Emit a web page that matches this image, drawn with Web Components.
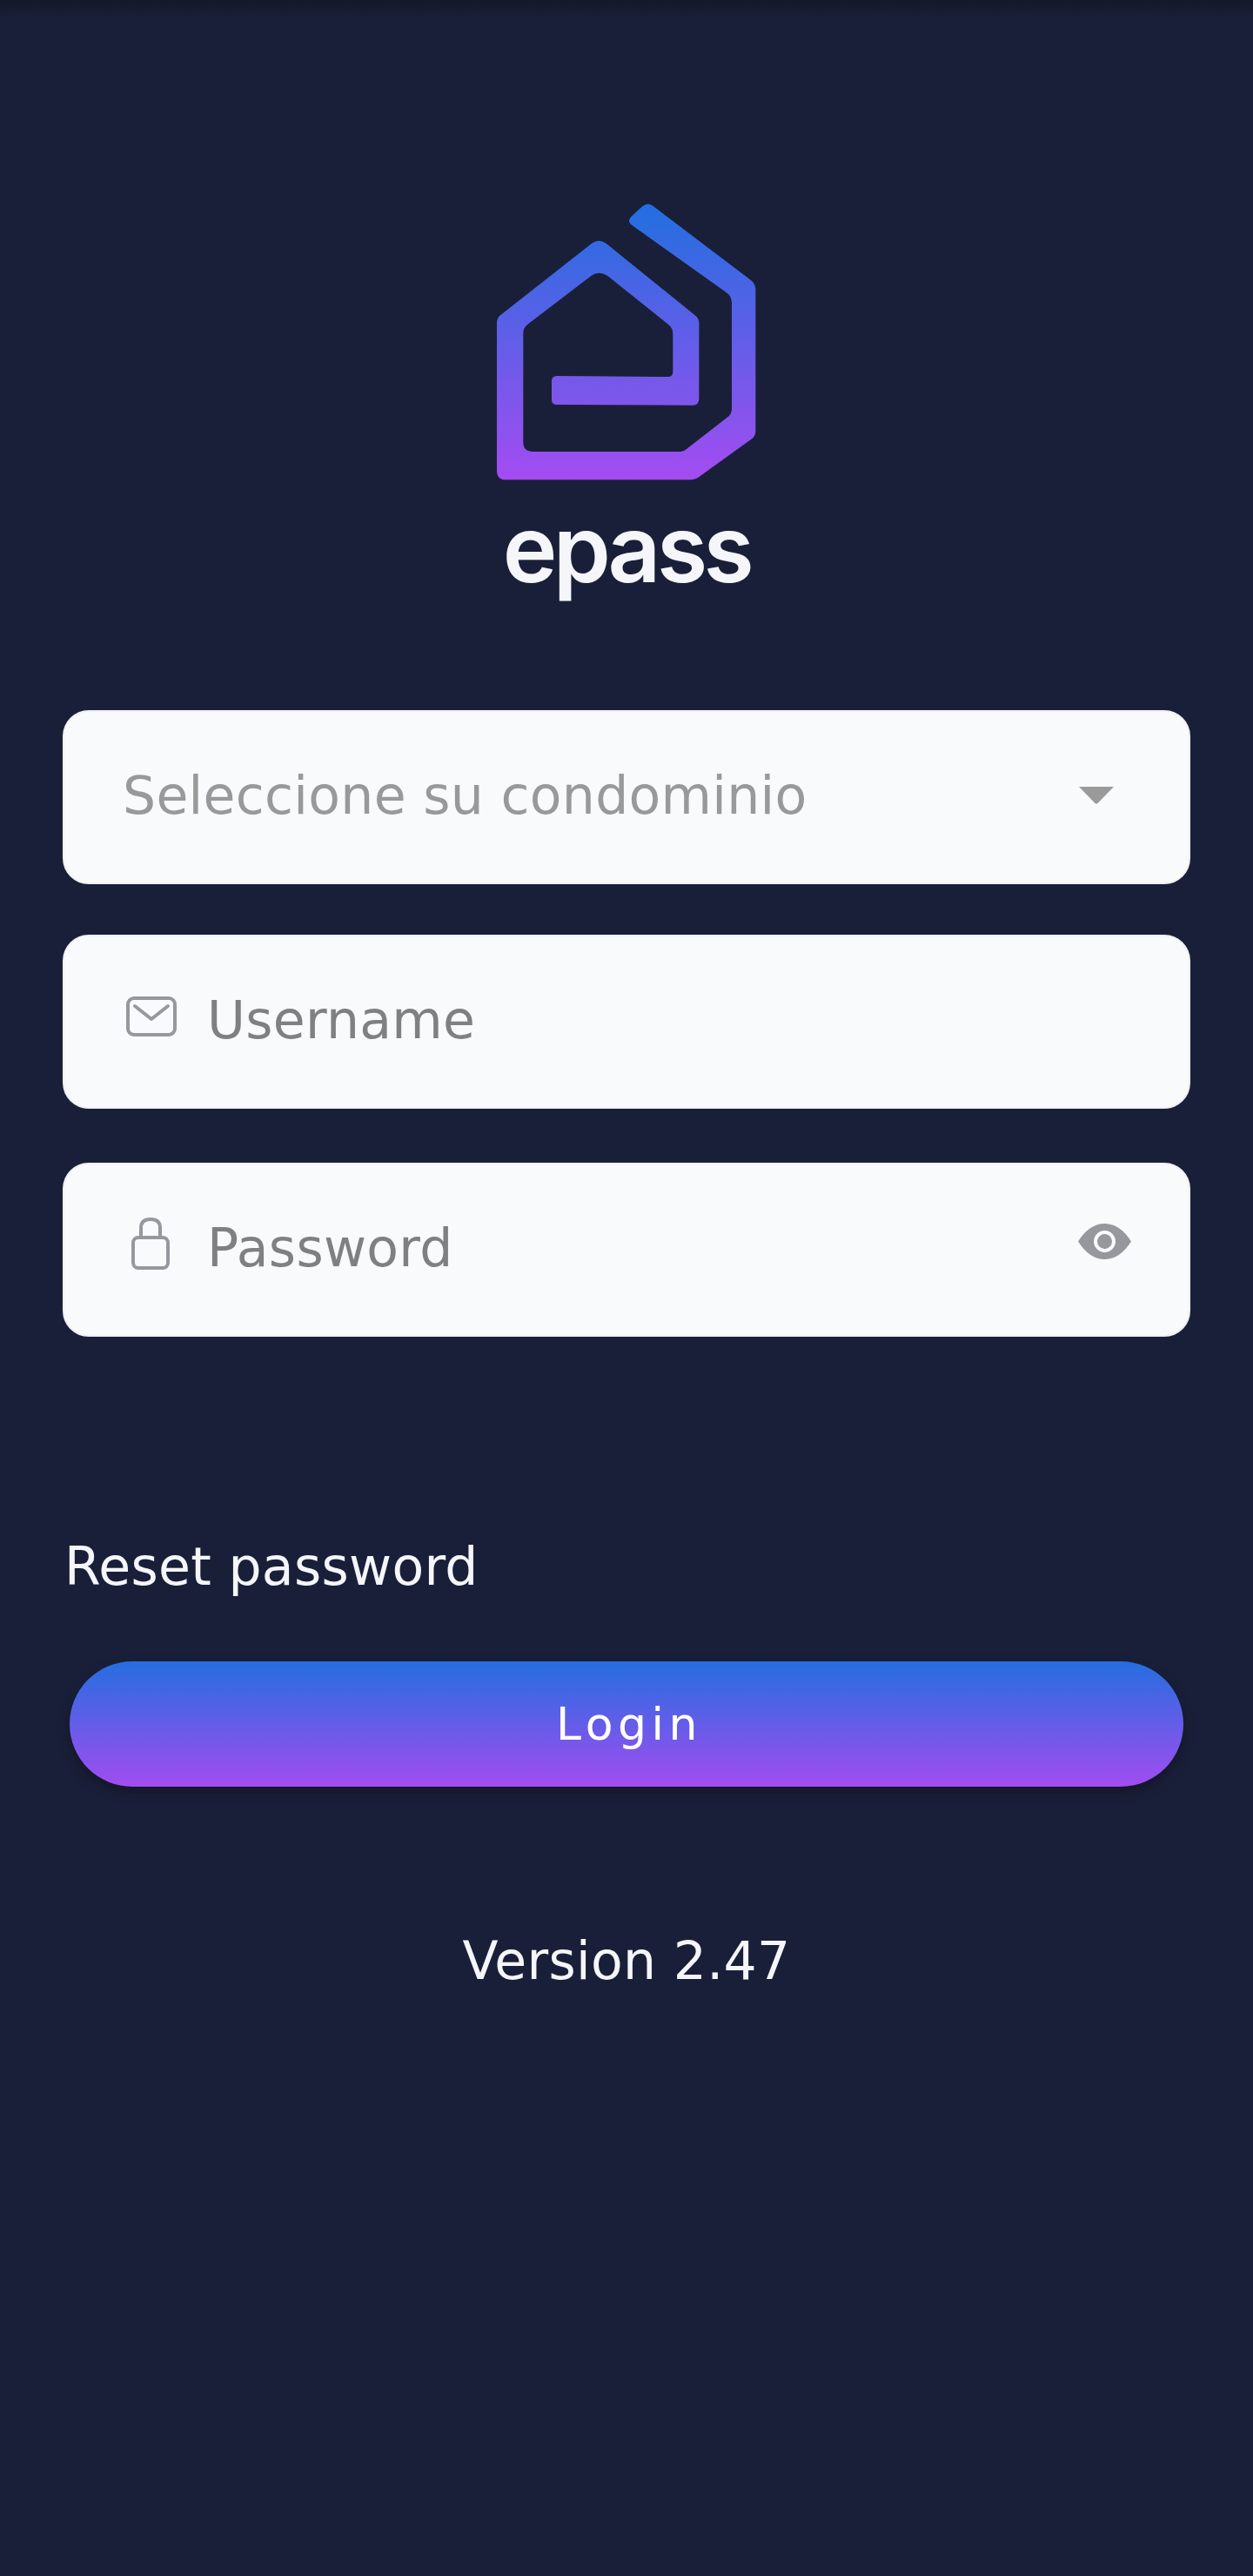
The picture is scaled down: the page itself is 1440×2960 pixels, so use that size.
<!DOCTYPE html>
<html lang="es">
<head>
<meta charset="utf-8">
<title>epass</title>
<style>
  html, body { margin: 0; padding: 0; background: #1a1f39; }
</style>
</head>
<body>
<login-screen></login-screen>

<script>
const FONT = '"DejaVu Sans", Inter, sans-serif';

class EpassLogo extends HTMLElement {
  constructor() {
    super();
    this.attachShadow({ mode: 'open' }).innerHTML = `
      <style>
        :host { display: flex; flex-direction: column; align-items: center; }
        svg { display: block; flex: none; width: 300px; height: 320px; }
        .name {
          font: 600 106px/108px Inter, "Noto Sans", sans-serif;
          color: #f4f6f9;
          letter-spacing: -4.5px;
          margin-top: 24px;
        }
      </style>
      <svg viewBox="150 100 900 960" aria-hidden="true">
        <defs>
          <linearGradient id="logo" gradientUnits="userSpaceOnUse" x1="0" y1="103" x2="0" y2="1055">
            <stop offset="0" stop-color="#216fe0"/>
            <stop offset="1" stop-color="#a44cf1"/>
          </linearGradient>
        </defs>
        <path fill="url(#logo)" d="M616 148 L655 112 Q672 98 690 110 L1030 368 Q1045 380 1045 400 L1045 885 Q1045 905 1030 915
          L850 1045 Q838 1055 825 1055 L185 1055 Q153 1055 153 1023 L153 515 Q153 498 165 488 L480 240 Q505 222 530 240
          L835 487 Q850 498 850 515 L850 775 Q850 798 828 798 L360 796 Q342 796 342 778 L342 715 Q342 697 360 697
          L742 700 Q760 700 760 682 L760 552 Q760 532 745 520 L535 352 Q505 332 478 352 L258 520 Q244 532 244 550
          L244 925 Q244 958 278 958 L780 958 Q796 958 808 948 L945 842 Q963 830 963 810 L963 445 Q963 423 945 410
          L620 178 Q600 164 616 148 Z"/>
      </svg>
      <div class="name">epass</div>
    `;
  }
}
customElements.define('epass-logo', EpassLogo);

class FormField extends HTMLElement {
  constructor() {
    super();
    this.attachShadow({ mode: 'open' }).innerHTML = `
      <style>
        :host {
          display: flex;
          align-items: center;
          box-sizing: border-box;
          height: 200px;
          padding-left: 67px;
          background: #f8fafc;
          border: 2px solid #eff1f3;
          border-radius: 30px;
          font: 400 60px/80px ${FONT};
          letter-spacing: 0.3px;
          color: var(--field-color, #808080);
        }
        .lead { flex: none; display: flex; }
        .text { flex: 1; margin-top: -5px; white-space: nowrap; }
        .trail { flex: none; display: flex; }
      </style>
      <div class="lead"><slot name="lead"></slot></div>
      <div class="text"><slot></slot></div>
      <div class="trail"><slot name="trail"></slot></div>
    `;
  }
}
customElements.define('form-field', FormField);

class GradientButton extends HTMLElement {
  constructor() {
    super();
    this.attachShadow({ mode: 'open' }).innerHTML = `
      <style>
        :host {
          display: flex;
          align-items: center;
          justify-content: center;
          height: 144px;
          border-radius: 72px;
          padding-left: 6px;
          background: linear-gradient(180deg, #256ee0 0%, #a24cf1 100%);
          box-shadow: 0 6px 14px rgba(0, 0, 0, 0.3);
          color: #fff;
          font: 400 52px/60px ${FONT};
          letter-spacing: 5.5px;
        }
      </style>
      <slot></slot>
    `;
  }
}
customElements.define('gradient-button', GradientButton);

class LoginScreen extends HTMLElement {
  constructor() {
    super();
    this.attachShadow({ mode: 'open' }).innerHTML = `
      <style>
        :host {
          display: block;
          box-sizing: border-box;
          width: 1440px;
          height: 2960px;
          padding: 0 72px;
          overflow: hidden;
          background: linear-gradient(180deg, #141829 0, #1a1f39 22px);
          font-family: ${FONT};
          color: #f4f6f9;
        }
        epass-logo { padding-top: 233px; height: 816px; box-sizing: border-box; }
        form-field + form-field { margin-top: 58px; }
        form-field.password { margin-top: 62px; }
        .select { --field-color: #999; }
        .reset { margin: 224px 0 0 2px; font-size: 60px; line-height: 80px; letter-spacing: 0.3px; height: 149px; }
        gradient-button { margin: 0 8px; }
        .version { margin-top: 160px; text-align: center; font-size: 60px; line-height: 80px; letter-spacing: 0.3px; }
        .mail { margin: -12px 35px 0 4px; }
        .lock { margin: -14px 43px 0 10px; }
        .chevron { margin: -5px 86px 0 0; }
        .eye { margin: -19px 66px 0 0; }
      </style>
      <epass-logo></epass-logo>
      <form-field class="select">
        Seleccione su condominio
        <svg slot="trail" class="chevron" width="40" height="20" viewBox="0 0 40 20"><path fill="#9a9a9a" d="M0 0 H40 L21.5 19 Q20 20 18.5 19 Z"/></svg>
      </form-field>
      <form-field>
        <svg slot="lead" class="mail" width="58" height="46" viewBox="0 0 58 46" fill="none" stroke="#96989e" stroke-width="4" stroke-linecap="round" stroke-linejoin="round">
          <rect x="2" y="2" width="54" height="42" rx="7"/>
          <path d="M10 11 L29 26 L48 11"/>
        </svg>
        Username
      </form-field>
      <form-field class="password">
        <svg slot="lead" class="lock" width="44" height="60" viewBox="0 0 44 60" fill="none" stroke="#96989e" stroke-width="4">
          <rect x="2" y="23" width="40" height="35" rx="6"/>
          <path d="M11 23 V12 Q11 2 22 2 Q33 2 33 12 V23"/>
        </svg>
        Password
        <svg slot="trail" class="eye" width="61" height="41" viewBox="0 0 61 41">
          <path fill="#96989e" d="M0 20.5 Q13 0 30.5 0 Q48 0 61 20.5 Q48 41 30.5 41 Q13 41 0 20.5 Z"/>
          <circle cx="30.5" cy="20.5" r="10.5" fill="none" stroke="#f8fafc" stroke-width="4"/>
        </svg>
      </form-field>
      <div class="reset">Reset password</div>
      <gradient-button>Login</gradient-button>
      <div class="version">Version 2.47</div>
    `;
  }
}
customElements.define('login-screen', LoginScreen);
</script>
</body>
</html>
